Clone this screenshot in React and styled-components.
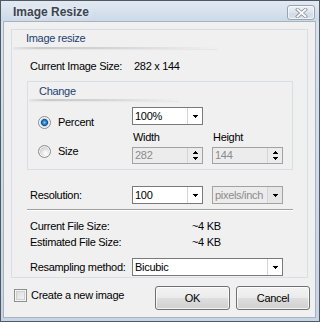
import React from 'react';
import styled, { createGlobalStyle } from 'styled-components';

const Global = createGlobalStyle`
  html, body { margin: 0; padding: 0; background: #ffffff; }
  body { font-family: "Liberation Sans", Arial, sans-serif; }
`;

const Window = styled.div`
  width: 320px;
  height: 322px;
  box-sizing: border-box;
  border: 1px solid #4f5965;
  background: linear-gradient(#d9e3ee, #c6d4e4);
  display: flex;
  flex-direction: column;
  font-family: "Liberation Sans", Arial, sans-serif;
  font-size: 11px;
  line-height: 13px;
  letter-spacing: -0.3px;
  color: #000;
`;

const TitleBar = styled.div`
  height: 20px;
  flex: none;
  box-sizing: border-box;
  padding: 4px 4px 0 12px;
  display: flex;
  align-items: flex-start;
  justify-content: space-between;
  background: linear-gradient(#e2e9f2, #ccd9e8);
`;

const Title = styled.div`
  font-size: 12px;
  line-height: 14px;
  font-weight: bold;
  letter-spacing: 0;
  color: #3d4450;
  text-shadow: 0 0 6px rgba(255, 255, 255, 0.9);
`;

const CloseButton = styled.div`
  width: 28px;
  height: 15px;
  box-sizing: border-box;
  border: 1px solid #97a3b2;
  border-radius: 3px;
  background: linear-gradient(#eef2f6, #dde4ec 50%, #d2dae4 51%, #dbe2ea);
  box-shadow: inset 0 0 0 1px rgba(255, 255, 255, 0.6);
  display: flex;
  align-items: center;
  justify-content: center;
`;

const Panel = styled.div`
  flex: 1;
  margin: 0 3px 3px 2px;
  border: 1px solid #a9b3bf;
  background: #f0f0f0;
  display: flex;
  flex-direction: column;
`;

const Group = styled.div`
  border: 1px solid #d5dfe5;
  display: flex;
  flex-direction: column;
`;

const OuterGroup = styled(Group)`
  margin: 7px 7px 0 7px;
  padding-bottom: 1px;
`;

const ChangeGroup = styled(Group)`
  margin-top: 8px;
`;

const GroupHeader = styled.div`
  height: 17px;
  box-sizing: border-box;
  padding: ${p => p.$top}px 0 0 ${p => p.$left}px;
  color: #1e3e70;
`;

const HeaderRule = styled.div`
  height: 2px;
  width: ${p => p.$width}px;
  margin-left: 1px;
  background: linear-gradient(
    to right,
    rgba(0, 0, 0, 0.04),
    rgba(0, 0, 0, 0.16) 12%,
    rgba(0, 0, 0, 0.12) 45%,
    rgba(0, 0, 0, 0)
  );
  box-shadow: 0 1px 1px rgba(0, 0, 0, 0.04);
`;

const Body = styled.div`
  display: flex;
  flex-direction: column;
  padding: 0 14px 0 15px;
`;

const Row = styled.div`
  display: flex;
  align-items: center;
  height: ${p => p.$h || 13}px;
  margin-top: ${p => p.$mt || 0}px;
  padding-left: 3px;
`;

const Label = styled.div`
  width: ${p => p.$w}px;
  flex: none;
  white-space: nowrap;
`;

const Value = styled.div`
  padding-left: ${p => p.$pl || 0}px;
  white-space: nowrap;
`;

const Controls = styled.div`
  display: flex;
  gap: 9px;
`;

const ChangeBody = styled.div`
  display: flex;
  padding-bottom: 5px;
`;

const RadioColumn = styled.div`
  width: 104px;
  box-sizing: border-box;
  padding: 15px 0 0 10px;
  display: flex;
  flex-direction: column;
  gap: 16px;
`;

const RadioRow = styled.div`
  display: flex;
  align-items: center;
  gap: 7px;
  height: 13px;
`;

const Radio = styled.span`
  width: 13px;
  height: 13px;
  flex: none;
  box-sizing: border-box;
  border-radius: 50%;
  border: 1px solid #8a8c8e;
  background: ${p =>
    p.$checked
      ? 'radial-gradient(circle at 50% 50%, #7fd0ff 0, #2b8fd8 1.6px, #0e5696 3.2px, #c9ced3 3.8px, #f4f4f4 5.5px)'
      : 'radial-gradient(circle at 60% 65%, #ffffff 0, #f2f2f2 2px, #d4d4d4 5.5px)'};
  box-shadow: inset 0 0 0 1px rgba(255, 255, 255, 0.7);
`;

const ControlGrid = styled.div`
  display: grid;
  grid-template-columns: 71px 71px;
  column-gap: 9px;
  padding-top: 6px;
  align-content: start;
`;

const FieldLabel = styled.div`
  margin-top: 6px;
  padding-left: 1px;
  height: 13px;
`;

const Box = styled.div`
  width: ${p => p.$w}px;
  height: ${p => p.$h || 18}px;
  margin-top: ${p => p.$mt || 0}px;
  box-sizing: border-box;
  border: 1px solid ${p => (p.$disabled ? '#a2a2a2' : '#7a7a7a')};
  background: ${p => (p.$disabled ? '#ececec' : '#ffffff')};
  color: ${p => (p.$disabled ? '#8b8b8b' : '#000')};
  display: flex;
  flex: none;
`;

const BoxText = styled.div`
  flex: 1;
  padding-left: 2px;
  display: flex;
  align-items: center;
  white-space: nowrap;
  overflow: hidden;
`;

const ArrowZone = styled.div`
  width: 14px;
  flex: none;
  border-left: 1px solid #d4d4d4;
  display: flex;
  align-items: center;
  justify-content: center;
  background: ${p => (p.$disabled ? '#e6e6e6' : 'transparent')};
`;

const Separator = styled.div`
  margin-top: 5px;
  height: 0;
  border-top: 1px solid #a0a0a0;
  border-bottom: 1px solid #ffffff;
`;

const BottomBar = styled.div`
  display: flex;
  align-items: flex-start;
  height: 24px;
  margin-top: 8px;
  padding: 0 5px 0 10px;
`;

const CheckWrap = styled.label`
  display: flex;
  align-items: center;
  gap: 4px;
  margin-top: 3px;
  height: 13px;
`;

const CheckBox = styled.span`
  width: 13px;
  height: 13px;
  box-sizing: border-box;
  border: 1px solid #8e8f8f;
  background: linear-gradient(135deg, #d8d8d8, #f7f7f7);
  box-shadow: inset 0 0 0 1px #f4f4f4, inset 0 0 0 2px #cfcfcf;
`;

const Buttons = styled.div`
  margin-left: auto;
  display: flex;
  gap: 6px;
`;

const Button = styled.div`
  width: ${p => p.$w}px;
  height: 24px;
  box-sizing: border-box;
  border: 1px solid #707070;
  border-radius: 3px;
  background: linear-gradient(#f3f3f3, #ebebeb 48%, #dedede 50%, #d0d0d0);
  box-shadow: inset 0 0 0 1px rgba(255, 255, 255, 0.75);
  display: flex;
  align-items: center;
  justify-content: center;
`;

const DropArrow = () => (
  <svg width="5" height="3" viewBox="0 0 5 3" shapeRendering="crispEdges">
    <path d="M0 0h5v1H0zM1 1h3v1H1zM2 2h1v1H2z" fill="#000" />
  </svg>
);

const SpinArrows = () => (
  <svg width="5" height="9" viewBox="0 0 5 9" shapeRendering="crispEdges">
    <path d="M2 0h1v1H2zM1 1h3v1H1zM0 2h5v1H0zM0 6h5v1H0zM1 7h3v1H1zM2 8h1v1H2z" fill="#000" />
  </svg>
);

const CloseGlyph = () => (
  <svg width="13" height="10" viewBox="0 0 13 10">
    <path d="M2.5 1.5 L10.5 8.5 M10.5 1.5 L2.5 8.5" stroke="#8994a2" strokeWidth="3.4" strokeLinecap="square" />
    <path d="M2.5 1.5 L10.5 8.5 M10.5 1.5 L2.5 8.5" stroke="#ffffff" strokeWidth="1.7" strokeLinecap="square" />
  </svg>
);

const Combo = ({ w, value, disabled, spin, mt, h }) => (
  <Box $w={w} $disabled={disabled} $mt={mt} $h={h}>
    <BoxText>{value}</BoxText>
    <ArrowZone $disabled={disabled && !spin}>{spin ? <SpinArrows /> : <DropArrow />}</ArrowZone>
  </Box>
);

export default function App() {
  return (
    <>
      <Global />
      <Window>
        <TitleBar>
          <Title>Image Resize</Title>
          <CloseButton>
            <CloseGlyph />
          </CloseButton>
        </TitleBar>
        <Panel>
          <OuterGroup>
            <GroupHeader $top={2} $left={14}>Image resize</GroupHeader>
            <HeaderRule $width={205} />
            <Body>
              <Row $mt={11}>
                <Label $w={102}>Current Image Size:</Label>
                <Value $pl={2}>282 x 144</Value>
              </Row>

              <ChangeGroup>
                <GroupHeader $top={3} $left={11}>Change</GroupHeader>
                <HeaderRule $width={150} />
                <ChangeBody>
                  <RadioColumn>
                    <RadioRow>
                      <Radio $checked />
                      <span>Percent</span>
                    </RadioRow>
                    <RadioRow>
                      <Radio />
                      <span>Size</span>
                    </RadioRow>
                  </RadioColumn>
                  <ControlGrid>
                    <Combo w={71} value="100%" />
                    <div />
                    <FieldLabel>Width</FieldLabel>
                    <FieldLabel>Height</FieldLabel>
                    <Combo w={71} h={17} mt={3} value="282" disabled spin />
                    <Combo w={71} h={17} mt={3} value="144" disabled spin />
                  </ControlGrid>
                </ChangeBody>
              </ChangeGroup>

              <Row $h={18} $mt={16}>
                <Label $w={102}>Resolution:</Label>
                <Controls>
                  <Combo w={71} value="100" />
                  <Combo w={71} value="pixels/inch" disabled />
                </Controls>
              </Row>

              <Separator />

              <Row $mt={9}>
                <Label $w={162}>Current File Size:</Label>
                <Value>~4 KB</Value>
              </Row>
              <Row $mt={3}>
                <Label $w={162}>Estimated File Size:</Label>
                <Value>~4 KB</Value>
              </Row>

              <Row $h={18} $mt={9}>
                <Label $w={102}>Resampling method:</Label>
                <Combo w={151} value="Bicubic" />
              </Row>
            </Body>
          </OuterGroup>

          <BottomBar>
            <CheckWrap>
              <CheckBox />
              <span>Create a new image</span>
            </CheckWrap>
            <Buttons>
              <Button $w={75}>OK</Button>
              <Button $w={74}>Cancel</Button>
            </Buttons>
          </BottomBar>
        </Panel>
      </Window>
    </>
  );
}
